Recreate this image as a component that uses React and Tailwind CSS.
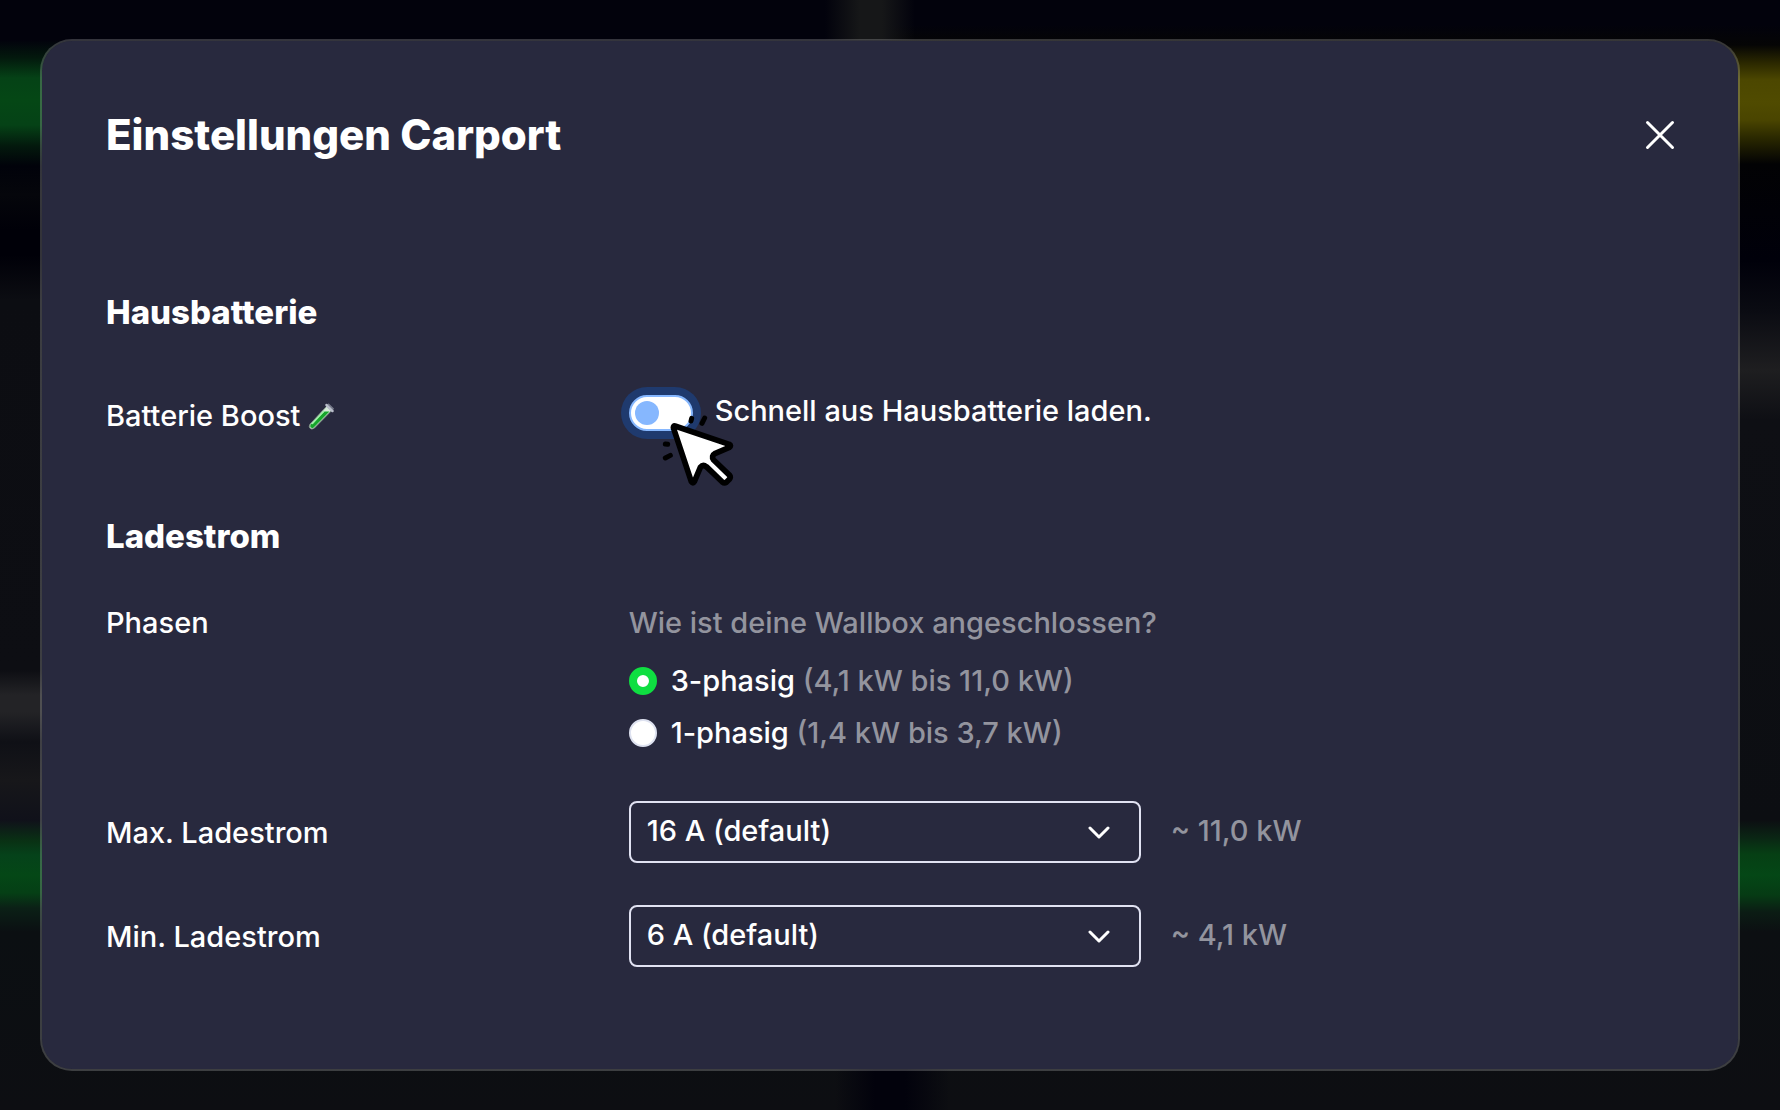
import { useState } from "react";

function TestTube() {
  return (
    <svg viewBox="0 0 28 28" className="size-7 shrink-0" aria-hidden="true">
      <path d="M18.8 4.2 L23.6 8.6 L6.2 26.2 Q3.6 28 1.8 26 Q0.4 24.2 2.2 22 Z" fill="#d5ead8" stroke="#7f9286" strokeWidth="1" />
      <path d="M16.5 9.5 L21.5 9.5 L5.7 25.4 Q3.9 26.5 2.6 25.2 Q1.6 24 2.8 22.5 Z" fill="#16a52b" />
      <path d="M18.5 3 L24.5 9" stroke="#b9bdca" strokeWidth="2.5" strokeLinecap="round" />
      <path d="M20.5 2.3 L25.2 6.8" stroke="#777b8a" strokeWidth="1.5" strokeLinecap="round" />
      <path d="M15.5 9.5 L4.5 21.5" stroke="#9cf0a6" strokeWidth="1.4" strokeLinecap="round" />
    </svg>
  );
}

function ClickCursor() {
  return (
    <svg
      viewBox="180 132 228 222"
      className="pointer-events-none absolute top-[19px] left-[31px] h-[74px] w-[76px]"
      aria-hidden="true"
    >
      <path
        d="M225 168 L388 223 Q395 227 388 232 L346 250 Q332 258 341 270 L389 316 Q393 322 388 328 L379 337 Q373 341 367 336 L319 290 Q309 282 301 292 L283 335 Q279 342 274 335 L220 173 Q220 167 225 168 Z"
        fill="#fff"
        stroke="#000"
        strokeWidth="17"
        strokeLinejoin="round"
      />
      <path
        d="M273 153 L275 145 M306 160 L314 144 M196 222 L203 223 M196 264 L211 256"
        stroke="#000"
        strokeWidth="15"
        strokeLinecap="round"
      />
    </svg>
  );
}

function PhaseOption({ value, checked, onSelect, name, range }) {
  return (
    <label className="flex items-center gap-[14px]">
      <input
        type="radio"
        name="phases"
        value={value}
        checked={checked}
        onChange={() => onSelect(value)}
        className="size-7 shrink-0 appearance-none rounded-full border-2 border-[#dee2f0] bg-white checked:border-8 checked:border-[#0fde41]"
      />
      <span>
        {name} <span className="text-[#93949e]">{range}</span>
      </span>
    </label>
  );
}

function CurrentRow({ id, label, options, note }) {
  return (
    <div className="grid grid-cols-3 items-center">
      <label htmlFor={id} className="pt-[2px]">
        {label}
      </label>
      <div className="col-span-2 flex items-center gap-[30px]">
        <div className="relative w-128">
          <select
            id={id}
            className="block h-[62px] w-full appearance-none rounded-lg border-2 border-[#e1e2f2] bg-transparent px-4 pb-[2px]"
          >
            {options.map((o) => (
              <option key={o} className="bg-[#28293e]">
                {o}
              </option>
            ))}
          </select>
          <svg
            viewBox="0 0 22 14"
            className="pointer-events-none absolute top-[25px] right-[31px] h-[14px] w-[22px]"
            fill="none"
            stroke="#fff"
            strokeWidth="3"
            strokeLinecap="round"
            strokeLinejoin="round"
            aria-hidden="true"
          >
            <path d="M2 2 L11 11 L20 2" />
          </svg>
        </div>
        <span className="pb-[2px] text-[#93949e]">{note}</span>
      </div>
    </div>
  );
}

export default function App() {
  const [boost, setBoost] = useState(false);
  const [phases, setPhases] = useState("3");
  return (
    <main className="min-h-screen px-10 py-[39px] font-['Inter','Liberation_Sans',sans-serif] text-[29px] leading-[42px] font-medium text-white [background:linear-gradient(90deg,#16171800_825px,#161718_860px,#161718_882px,#16171800_915px)_top/100%_40px_no-repeat,linear-gradient(90deg,#02020c00_835px,#02020c_875px,#02020c_905px,#02020c00_950px)_bottom/100%_50px_no-repeat,linear-gradient(180deg,#02020c_40px,#03190d_58px,#054216_78px,#054715_100px,#054216_125px,#03190d_146px,#01020a_166px,#05060b_195px,#000008_230px,#000008_255px,#0c0d12_300px,#0d0e13_670px,#232326_695px,#232326_712px,#0f1016_742px,#17171a_780px,#10111a_820px,#093114_841px,#05421a_855px,#044716_875px,#053f15_893px,#0b2016_908px,#0b0f12_932px,#0d0e12_100%)_left/50%_100%_no-repeat,linear-gradient(180deg,#02020c_25px,#050505_45px,#2b2800_63px,#4c4700_80px,#504b00_102px,#4a4500_120px,#2a2800_138px,#020204_164px,#00000a_260px,#0a0b12_310px,#1e1e20_370px,#0e0f14_420px,#0c0e12_820px,#0a2614_838px,#063f14_854px,#044716_875px,#063b14_895px,#0b1c14_912px,#0c0f12_932px,#0d0e12_100%)_right/50%_100%_no-repeat]">
      <section
        role="dialog"
        aria-labelledby="dialog-title"
        className="rounded-[32px] border-2 border-white/20 bg-[#28293e] bg-clip-padding px-16 pt-[70px] pb-[102px]"
      >
        <header className="flex items-center justify-between">
          <h1 id="dialog-title" className="text-[42px] leading-12 font-extrabold">
            Einstellungen Carport
          </h1>
          <button type="button" aria-label="Schließen" className="-mr-[2px] flex size-8 items-center justify-center">
            <svg viewBox="0 0 32 32" className="size-8" stroke="#fff" strokeWidth="3" strokeLinecap="round">
              <path d="M3.5 3.5 L28.5 28.5 M28.5 3.5 L3.5 28.5" />
            </svg>
          </button>
        </header>

        <h2 className="mt-[134px] text-[33px] leading-[38px] font-extrabold">Hausbatterie</h2>
        <div className="mt-16 grid grid-cols-3 items-start">
          <label htmlFor="boost" className="flex items-center gap-2">
            Batterie Boost <TestTube />
          </label>
          <div className="relative col-span-2 flex items-start">
            <input
              id="boost"
              type="checkbox"
              role="switch"
              checked={boost}
              onChange={(e) => setBoost(e.target.checked)}
              className="flex h-9 w-16 shrink-0 appearance-none items-center rounded-full border-2 border-[#86b7fe] bg-white px-1 ring-8 ring-[#1f3a6e] before:size-6 before:rounded-full before:bg-[#86b7fe] checked:justify-end"
            />
            <label htmlFor="boost" className="ml-[22px] leading-8">
              Schnell aus Hausbatterie laden.
            </label>
            <ClickCursor />
          </div>
        </div>

        <h2 className="mt-20 text-[33px] leading-[38px] font-extrabold">Ladestrom</h2>
        <fieldset className="mt-[47px] grid grid-cols-3 items-start" aria-labelledby="phases-label">
          <span id="phases-label">Phasen</span>
          <div className="col-span-2">
            <p className="mb-4 text-[#93949e]">Wie ist deine Wallbox angeschlossen?</p>
            <div className="flex flex-col gap-[10px]">
              <PhaseOption value="3" name="3-phasig" range="(4,1 kW bis 11,0 kW)" checked={phases === "3"} onSelect={setPhases} />
              <PhaseOption value="1" name="1-phasig" range="(1,4 kW bis 3,7 kW)" checked={phases === "1"} onSelect={setPhases} />
            </div>
          </div>
        </fieldset>

        <div className="mt-[47px] flex flex-col gap-[42px]">
          <CurrentRow id="max-current" label="Max. Ladestrom" options={["16 A (default)"]} note="~ 11,0 kW" />
          <CurrentRow id="min-current" label="Min. Ladestrom" options={["6 A (default)"]} note="~ 4,1 kW" />
        </div>
      </section>
    </main>
  );
}
